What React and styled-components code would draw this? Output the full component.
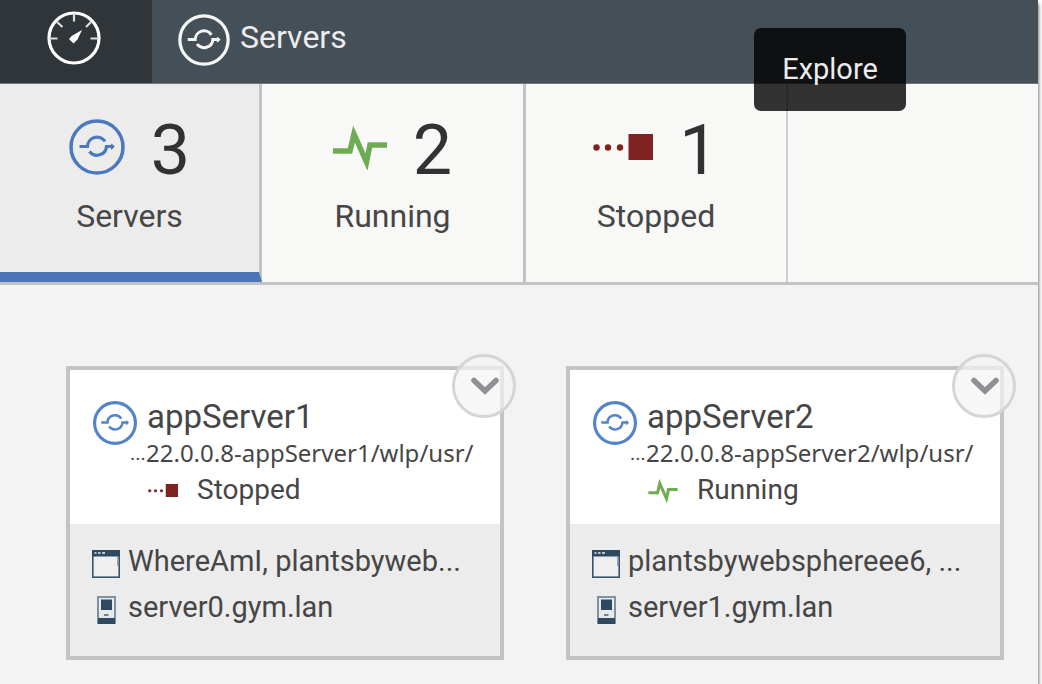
import React from "react";
import styled, { createGlobalStyle } from "styled-components";

const GlobalStyle = createGlobalStyle`
  *, *::before, *::after { box-sizing: border-box; }
  body {
    margin: 0;
    background: #fdfdfd;
    color: #464646;
    font-family: Roboto, "Liberation Sans", sans-serif;
  }
  button {
    margin: 0;
    padding: 0;
    border: 0;
    background: none;
    color: inherit;
    font: inherit;
    cursor: pointer;
  }
  svg { display: block; flex: none; }
`;

const Page = styled.div`
  position: relative;
  min-height: 100vh;
  margin-right: 4px;
  background: #f3f3f3;
  box-shadow: 1px 4px 3px rgba(0, 0, 0, 0.5);
`;

const Header = styled.header`
  display: flex;
  height: 84px;
  background: #454f57;
  border-bottom: 1px solid #6f777d;
`;

const DashboardButton = styled.button`
  display: flex;
  justify-content: center;
  width: 152px;
  height: 83px;
  padding: 11px 4px 0 0;
  background: #2f3538;
`;

const Heading = styled.h1`
  display: flex;
  gap: 10px;
  margin: 0;
  padding: 14px 0 0 26px;
  color: #ececec;
  font-size: 32px;
  font-weight: 400;
  line-height: 46px;
`;

const Tooltip = styled.div`
  position: absolute;
  z-index: 2;
  top: 28px;
  right: 132px;
  width: 152px;
  border-radius: 7px;
  background: rgba(0, 0, 0, 0.8);
  color: #ececec;
  font-size: 29px;
  line-height: 83px;
  text-align: center;
`;

const Tabs = styled.nav`
  display: grid;
  grid-template-columns: 262px 264px 262px 1fr;
  height: 201px;
  border-bottom: 3px solid #c3c3c3;
  background: #f8f8f7;
`;

const Tab = styled.button`
  display: flex;
  flex-direction: column;
  align-items: center;
  gap: 11px;
  padding-top: 31px;
  border-right: ${(p) => (p.$last ? 2 : 3)}px solid ${(p) => (p.$last ? "#cecece" : "#c3c3c3")};
  border-bottom: ${(p) => (p.$selected ? 10 : 0)}px solid #4b76b9;
  background: ${(p) => (p.$selected ? "#ececec" : "transparent")};
`;

const TabTop = styled.span`
  display: flex;
  gap: 26px;
`;

const TabIcon = styled.span`
  display: flex;
  align-items: center;
  height: 64px;
`;

const Count = styled.span`
  color: #323232;
  font-size: 70px;
  line-height: 70px;
`;

const TabLabel = styled.span`
  font-size: 32px;
  line-height: 40px;
`;

const Cards = styled.main`
  display: grid;
  grid-template-columns: repeat(auto-fill, 438px);
  gap: 62px;
  padding: 81px 34px 24px 66px;
`;

const Card = styled.article`
  position: relative;
  border: 4px solid #c3c3c3;
  background: #ececec;
`;

const CardHead = styled.div`
  padding: 26px 0 14px 23px;
  background: #fff;
`;

const TitleRow = styled.div`
  display: flex;
  gap: 10px;
  height: 42px;
`;

const TitleIcon = styled.span`
  height: 40px;
  padding-top: 5px;
`;

const Title = styled.h2`
  margin: 0;
  font-size: 33px;
  font-weight: 400;
  line-height: 42px;
`;

const Path = styled.div`
  display: flex;
  padding-left: 37px;
  font-family: "Noto Sans", sans-serif;
  font-size: 24px;
  line-height: 30px;
  white-space: nowrap;
`;

const Dots = styled.span`
  width: 16px;
  font-family: Roboto, sans-serif;
  font-size: 20px;
`;

const Status = styled.div`
  display: flex;
  align-items: center;
  gap: 19px;
  padding: 2px 0 0 55px;
  font-size: 28px;
  line-height: 40px;
`;

const CardBody = styled.div`
  padding: 14px 0 26px 22px;
`;

const Detail = styled.div`
  display: flex;
  align-items: center;
  gap: 8px;
  font-size: 29px;
  line-height: 46px;
  white-space: nowrap;
`;

const DetailIcon = styled.span`
  padding-top: 6px;
`;

const Expand = styled.button`
  position: absolute;
  top: -16px;
  right: -16px;
  display: flex;
  align-items: center;
  justify-content: center;
  width: 64px;
  height: 64px;
  border: 3px solid #d5d5d5;
  border-radius: 50%;
  background: rgba(243, 243, 243, 0.7);
  background-clip: padding-box;
`;

function ServerIcon({ size, color, ring = 3.5 }) {
  return (
    <svg width={size} height={size} viewBox="0 0 56 56" fill="none" stroke={color} aria-hidden="true">
      <circle cx="28" cy="28" r="26" strokeWidth={ring} />
      <g strokeWidth="3.2">
        <path d="M10.5 27.500H18.500A9.500 9.500 0 0 1 36 22.500" />
        <path d="M20.500 32.500A9.500 9.500 0 0 0 37.500 27.500H44" />
      </g>
      <path d="M42.500 25L45.500 27.500L42.500 30.500Z" fill={color} strokeWidth="0.8" />
    </svg>
  );
}

function GaugeIcon() {
  return (
    <svg width="54" height="54" viewBox="0 0 54 54" fill="none" stroke="#fff" aria-hidden="true">
      <circle cx="27" cy="27" r="25" strokeWidth="3.2" />
      <path d="M2 27.500H10.500M43.500 27.500H52M27 2V10.500M10 11L15.500 16M44 11L39 16" strokeWidth="2.2" stroke="#dcdedf" />
      <path d="M35 19L30.500 28.500L26.500 32.500L22 28L25 24.800Z" fill="#fff" stroke="none" />
    </svg>
  );
}

function RunningIcon({ width, height }) {
  return (
    <svg width={width} height={height} viewBox="0 0 54 46" fill="none" stroke="#6fab52" strokeWidth="5.5" aria-hidden="true">
      <path d="M0 27H17L21 10L33.500 38L37 21H54" strokeMiterlimit="8" />
    </svg>
  );
}

function StoppedIcon({ width, height }) {
  return (
    <svg width={width} height={height} viewBox="0 0 60 26" fill="#812222" aria-hidden="true">
      <circle cx="3.500" cy="13.500" r="3.200" />
      <circle cx="15" cy="13.500" r="3.200" />
      <circle cx="27" cy="13.500" r="3.200" />
      <rect x="35.500" width="24.500" height="26" />
    </svg>
  );
}

function AppIcon() {
  return (
    <svg width="28" height="28" viewBox="0 0 28 28" aria-hidden="true">
      <rect x="0.800" y="0.800" width="26.400" height="26.400" fill="#efefef" stroke="#37536a" strokeWidth="1.600" />
      <rect width="28" height="6.500" fill="#2f4a60" />
      <path d="M2.500 3H4.500M6 3H8.500M10 3H13" stroke="#b9c4cd" strokeWidth="2" />
      <path d="M25.500 7V16" stroke="#94a3af" strokeWidth="1" />
    </svg>
  );
}

function HostIcon() {
  return (
    <svg width="28" height="28" viewBox="0 0 28 28" aria-hidden="true">
      <rect x="5" width="19" height="28" fill="#7f92a1" />
      <rect x="7" y="2" width="15" height="20" fill="#e6eaed" />
      <rect x="9" y="3.500" width="11" height="10.500" fill="#2f4a60" />
      <path d="M12 19H16.500" stroke="#6d8494" strokeWidth="2" />
      <rect x="6" y="22" width="17" height="6" fill="#2f4a60" />
    </svg>
  );
}

function ChevronIcon() {
  return (
    <svg width="32" height="20" viewBox="0 0 32 20" fill="none" stroke="#8f9094" strokeWidth="5.500" strokeLinecap="round" aria-hidden="true">
      <path d="M6 4.500L17 15L28 4.500" />
    </svg>
  );
}

const tabs = [
  { label: "Servers", count: 3, icon: <ServerIcon size={56} color="#4b78be" /> },
  { label: "Running", count: 2, icon: <RunningIcon width={54} height={46} /> },
  { label: "Stopped", count: 1, icon: <StoppedIcon width={60} height={26} /> },
];

const servers = [
  {
    name: "appServer1",
    path: "22.0.0.8-appServer1/wlp/usr/",
    status: "Stopped",
    apps: "WhereAmI, plantsbyweb...",
    host: "server0.gym.lan",
  },
  {
    name: "appServer2",
    path: "22.0.0.8-appServer2/wlp/usr/",
    status: "Running",
    apps: "plantsbywebsphereee6, ...",
    host: "server1.gym.lan",
  },
];

function ServerCard({ server }) {
  return (
    <Card>
      <CardHead>
        <TitleRow>
          <TitleIcon>
            <ServerIcon size={44} color="#5484c8" ring={4} />
          </TitleIcon>
          <Title>{server.name}</Title>
        </TitleRow>
        <Path>
          <Dots>...</Dots>
          {server.path}
        </Path>
        <Status>
          {server.status === "Running" ? (
            <RunningIcon width={30} height={25} />
          ) : (
            <StoppedIcon width={30} height={13} />
          )}
          {server.status}
        </Status>
      </CardHead>
      <CardBody>
        <Detail>
          <DetailIcon>
            <AppIcon />
          </DetailIcon>
          {server.apps}
        </Detail>
        <Detail>
          <DetailIcon>
            <HostIcon />
          </DetailIcon>
          {server.host}
        </Detail>
      </CardBody>
      <Expand type="button" aria-label={`Actions for ${server.name}`}>
        <ChevronIcon />
      </Expand>
    </Card>
  );
}

export default function App() {
  return (
    <>
      <GlobalStyle />
      <Page>
        <Header>
          <DashboardButton type="button" aria-label="Dashboard">
            <GaugeIcon />
          </DashboardButton>
          <Heading>
            <ServerIcon size={52} color="#f4f5f5" />
            Servers
          </Heading>
        </Header>
        <Tooltip role="tooltip">Explore</Tooltip>
        <Tabs>
          {tabs.map((tab, i) => (
            <Tab key={tab.label} type="button" $selected={i === 0} $last={i === tabs.length - 1}>
              <TabTop>
                <TabIcon>{tab.icon}</TabIcon>
                <Count>{tab.count}</Count>
              </TabTop>
              <TabLabel>{tab.label}</TabLabel>
            </Tab>
          ))}
        </Tabs>
        <Cards>
          {servers.map((server) => (
            <ServerCard key={server.name} server={server} />
          ))}
        </Cards>
      </Page>
    </>
  );
}
